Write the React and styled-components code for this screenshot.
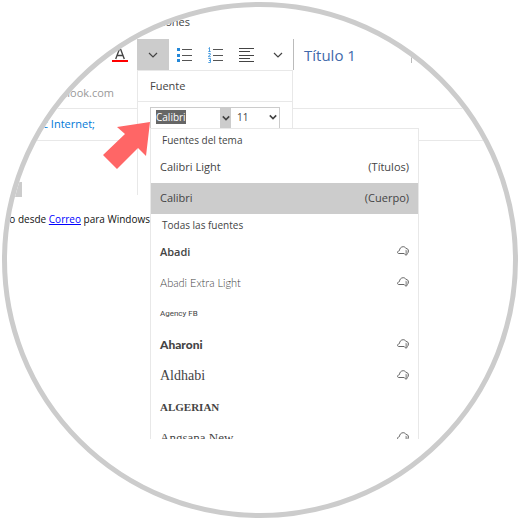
import React, { useEffect, useRef } from "react";
import styled, { createGlobalStyle } from "styled-components";

const themeFonts = [
  { name: "Calibri Light", note: "(Títulos)", family: '"Open Sans"', size: 11 },
  { name: "Calibri", note: "(Cuerpo)", family: '"Open Sans"', size: 11, selected: true },
];

const allFonts = [
  { name: "Abadi", family: '"Open Sans"', weight: 600, size: 11, cloud: true },
  { name: "Abadi Extra Light", family: "Lato", weight: 300, size: 11, cloud: true },
  { name: "Agency FB", family: "Roboto", size: 8 },
  { name: "Aharoni", family: "Lato", weight: 900, size: 12, cloud: true },
  { name: "Aldhabi", family: '"Liberation Serif"', size: 14, cloud: true },
  { name: "ALGERIAN", family: '"Liberation Serif"', weight: 700, size: 11 },
  { name: "Angsana New", family: '"Liberation Serif"', size: 13, cloud: true },
];

function Chevron({ size = 10, stroke = 1.2 }) {
  return (
    <svg width={size} height={size} viewBox="0 0 10 10" fill="none" stroke="currentColor" strokeWidth={stroke} aria-hidden="true">
      <path d="M1 3l4 4 4-4" />
    </svg>
  );
}

function FontColorIcon() {
  return (
    <svg width="20" height="16" viewBox="0 0 20 16" fill="none" aria-hidden="true">
      <path d="M3.7 12L7.6 1.6h.8L12.3 12M5 8.5h6" stroke="#444" strokeWidth="1.4" />
      <path d="M0 13h16v2H0z" fill="#f00" />
    </svg>
  );
}

function BulletsIcon() {
  return (
    <svg width="16" height="16" viewBox="0 0 16 16" fill="none" aria-hidden="true">
      <path d="M0 1h3v3H0zM0 7h3v3H0zM0 12h3v3H0z" fill="#2488d8" />
      <path d="M5 2.5h10M5 8.5h10M5 13.5h10" stroke="#555" />
    </svg>
  );
}

function NumbersIcon() {
  return (
    <svg width="16" height="16" viewBox="0 0 16 16" fill="none" aria-hidden="true">
      <path d="M.5 1.5l1-1v4M.3 4.5h2.4M.3 6.5h2v1.4L.5 9v.7h2.3M.3 11.5h2.2v4H.3M1 13.5h1.5" stroke="#2488d8" strokeWidth=".8" />
      <path d="M5 2.5h10M5 8.5h10M5 13.5h10" stroke="#555" />
    </svg>
  );
}

function AlignIcon() {
  return (
    <svg width="16" height="16" viewBox="0 0 16 16" fill="none" aria-hidden="true">
      <path d="M0 1.5h15M0 4.5h11M0 8.5h15M0 11.5h11M0 14.5h15" stroke="#444" />
    </svg>
  );
}

function CloudIcon() {
  return (
    <svg width="12" height="11" viewBox="0 0 12 11" fill="none" stroke="#666" strokeWidth="1" aria-hidden="true">
      <path d="M7 7.5H1.5C0 7.3.4 4.9 2.4 4.6 2.6 2.4 4 .7 6.2.7c1.3 0 2.2.7 2.7 1.6 1.6.2 2.5 1.1 2.5 2.7 0 1.1-.3 1.8-.9 2.3" />
      <path d="M9 3.8v5M9.8 4.5v3.5" stroke="#999" />
      <path d="M7.2 7.6L9 9.3l1.8-1.7" />
    </svg>
  );
}

function FontRow({ font }) {
  return (
    <Option role="option" aria-selected={!!font.selected} $selected={font.selected}>
      <FontName $family={font.family} $weight={font.weight} $size={font.size}>{font.name}</FontName>
      {font.note && <span>{font.note}</span>}
      {font.cloud && <CloudIcon />}
    </Option>
  );
}

export default function App() {
  const fontInput = useRef(null);

  // keep the current font marked so typing replaces it
  useEffect(() => {
    fontInput.current.focus();
    fontInput.current.select();
  }, []);

  return (
    <>
      <GlobalStyle />
      <Lens>
        <Tabs>
          <Tab href="#opciones">Opciones</Tab>
        </Tabs>
        <Toolbar>
          <ToolButton aria-label="Color de fuente"><FontColorIcon /></ToolButton>
          <ToolButton aria-label="Formato de fuente" $active><Chevron /></ToolButton>
          <ToolButton aria-label="Viñetas"><BulletsIcon /></ToolButton>
          <ToolButton aria-label="Numeración"><NumbersIcon /></ToolButton>
          <ToolButton aria-label="Alinear"><AlignIcon /></ToolButton>
          <ToolButton aria-label="Formato de párrafo"><Chevron /></ToolButton>
          <StyleButton>Título 1</StyleButton>
          <Separator />

          <Panel>
            <PanelTitle>Fuente</PanelTitle>
            <PanelFields>
              <FontInput ref={fontInput} aria-label="Fuente" defaultValue="Calibri" />
              <DropButton aria-label="Abrir lista de fuentes"><Chevron size={8} stroke={2} /></DropButton>
              <SizeField>
                <SizeSelect aria-label="Tamaño" defaultValue="11">
                  <option>10</option>
                  <option>11</option>
                  <option>12</option>
                </SizeSelect>
                <Chevron size={8} stroke={2} />
              </SizeField>
            </PanelFields>
            <FontList role="listbox" aria-label="Fuentes">
              <GroupTitle role="presentation">Fuentes del tema</GroupTitle>
              {themeFonts.map((font) => <FontRow key={font.name} font={font} />)}
              <GroupTitle role="presentation">Todas las fuentes</GroupTitle>
              {allFonts.map((font) => <FontRow key={font.name} font={font} />)}
            </FontList>
            <Pointer viewBox="0 0 47 47" aria-hidden="true">
              <path d="M47 0L14 5l8 7L0 33l14 14 21-21 8 8z" fill="#ff6666" />
            </Pointer>
          </Panel>
        </Toolbar>
        <Sender>outlook.com</Sender>
        <Recipient>Solvetic Internet;</Recipient>
        <Message>
          <Marker />
          <Signature>
            Enviado desde&nbsp;<a href="#correo">Correo</a>&nbsp;para Windows
          </Signature>
        </Message>
      </Lens>
    </>
  );
}

const GlobalStyle = createGlobalStyle`
  *{
    box-sizing: border-box;
  }
  body{
    margin: 0;
    background: #fff;
    color: #444;
    font-family: "Open Sans", sans-serif;
    font-size: 11px;
  }
  button, input, select{
    font: inherit;
    color: inherit;
    margin: 0;
    padding: 0;
    border: 0;
    border-radius: 0;
    background: none;
    outline: none;
  }
`;

const Lens = styled.main`
  margin: 2px;
  aspect-ratio: 1;
  border: 5px solid #ccc;
  border-radius: 50%;
  overflow: hidden;
  white-space: nowrap;
`;

const Tabs = styled.nav`
  display: flex;
  justify-content: flex-end;
  align-items: center;
  width: 183px;
  height: 28px;
  margin-bottom: 4px;
`;

const Tab = styled.a`
  color: inherit;
  text-decoration: none;
`;

const Toolbar = styled.div`
  position: relative;
  z-index: 1;
  display: flex;
  height: 31px;
  padding-left: 99px;
`;

const ToolButton = styled.button`
  display: flex;
  align-items: center;
  justify-content: center;
  flex: none;
  width: ${(props) => (props.$active ? "32px" : "31px")};
  background: ${(props) => (props.$active ? "#ccc" : "none")};
`;

const StyleButton = styled.button`
  flex: none;
  width: 118px;
  padding-left: 10px;
  border-left: 1px solid #bbb;
  color: #4169ab;
  font-size: 15px;
  text-align: left;
`;

const Separator = styled.span`
  width: 1px;
  height: 16px;
  align-self: center;
  background: #bbb;
`;

const Panel = styled.section`
  position: absolute;
  top: 100%;
  left: 130px;
  width: 156px;
  height: 125px;
  border: 1px solid #e8e8e8;
  border-bottom: 0;
  background: #fff;
`;

const PanelTitle = styled.h2`
  margin: 0;
  padding-left: 12px;
  border-bottom: 1px solid #e8e8e8;
  font-size: 11px;
  font-weight: 400;
  line-height: 30px;
`;

const PanelFields = styled.div`
  display: flex;
  height: 21px;
  margin: 5px 12px 0;
  border: 1px solid #ccc;
  border-bottom: 0;
  font-size: 10px;
`;

const FontInput = styled.input`
  flex: 1;
  min-width: 0;
  padding: 0 0 2px 5px;
  &::selection{
    background: #666;
    color: #fff;
  }
`;

const DropButton = styled.button`
  width: 11px;
  background: #ccc;
`;

const SizeField = styled.div`
  display: flex;
  align-items: center;
  width: 48px;
  padding: 0 2px 2px 0;
`;

const SizeSelect = styled.select`
  flex: 1;
  padding-left: 6px;
  appearance: none;
`;

const FontList = styled.ul`
  position: absolute;
  top: 57px;
  left: 12px;
  width: 269px;
  height: 311px;
  margin: 0;
  padding: 0;
  border: 1px solid #e8e8e8;
  border-bottom: 0;
  background: #fff;
  overflow: hidden;
  list-style: none;
`;

const GroupTitle = styled.li`
  padding-left: 11px;
  font-size: 10px;
  line-height: 23px;
`;

const Option = styled.li`
  display: flex;
  align-items: center;
  justify-content: space-between;
  height: 31px;
  padding: 0 9px 2px;
  background: ${(props) => (props.$selected ? "#ccc" : "none")};
`;

const FontName = styled.span`
  font-family: ${(props) => props.$family}, sans-serif;
  font-size: ${(props) => props.$size}px;
  font-weight: ${(props) => props.$weight || 400};
`;

const Pointer = styled.svg`
  position: absolute;
  top: 51px;
  left: -35px;
  width: 47px;
  height: 47px;
`;

const Sender = styled.div`
  display: flex;
  align-items: center;
  justify-content: flex-end;
  height: 39px;
  padding: 6px calc(100% - 107px) 0 0;
  border-bottom: 1px solid #e8e8e8;
  color: #999;
`;

const Recipient = styled.div`
  display: flex;
  align-items: center;
  justify-content: flex-end;
  height: 32px;
  padding: 0 calc(100% - 88px) 2px 0;
  border-bottom: 1px solid #e8e8e8;
  color: #0078d7;
`;

const Message = styled.article`
  padding-top: 41px;
  color: #111;
`;

const Marker = styled.div`
  width: 15px;
  height: 15px;
  background: #ccc;
`;

const Signature = styled.p`
  display: flex;
  justify-content: flex-end;
  width: 143px;
  margin: 12px 0 0;
  font-size: 10px;
  line-height: 20px;
  a{
    color: #00f;
  }
`;
